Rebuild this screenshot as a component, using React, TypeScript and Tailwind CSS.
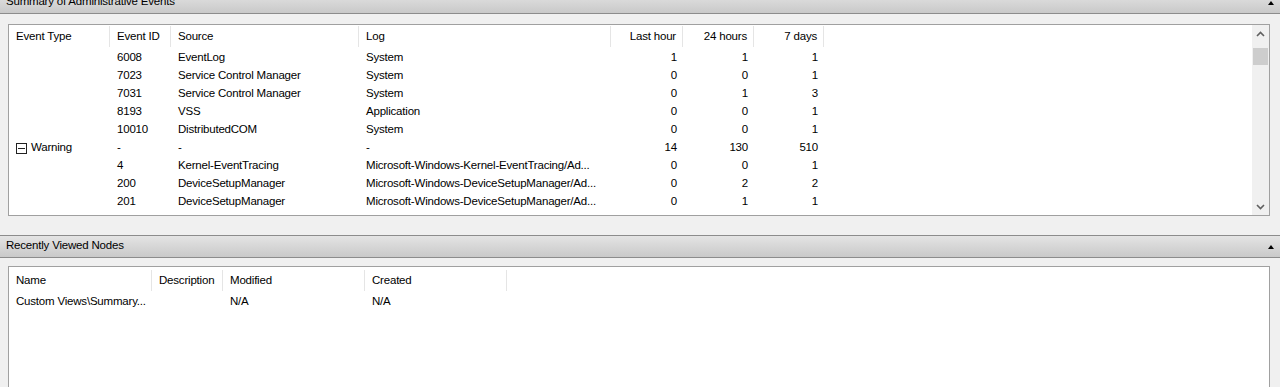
import { ReactNode } from "react";

type Row = {
  type?: string;
  expander?: boolean;
  id: string;
  source: string;
  log: string;
  hour: string;
  day: string;
  week: string;
};

const rows: Row[] = [
  { id: "6008", source: "EventLog", log: "System", hour: "1", day: "1", week: "1" },
  { id: "7023", source: "Service Control Manager", log: "System", hour: "0", day: "0", week: "1" },
  { id: "7031", source: "Service Control Manager", log: "System", hour: "0", day: "1", week: "3" },
  { id: "8193", source: "VSS", log: "Application", hour: "0", day: "0", week: "1" },
  { id: "10010", source: "DistributedCOM", log: "System", hour: "0", day: "0", week: "1" },
  { type: "Warning", expander: true, id: "-", source: "-", log: "-", hour: "14", day: "130", week: "510" },
  { id: "4", source: "Kernel-EventTracing", log: "Microsoft-Windows-Kernel-EventTracing/Ad...", hour: "0", day: "0", week: "1" },
  { id: "200", source: "DeviceSetupManager", log: "Microsoft-Windows-DeviceSetupManager/Ad...", hour: "0", day: "2", week: "2" },
  { id: "201", source: "DeviceSetupManager", log: "Microsoft-Windows-DeviceSetupManager/Ad...", hour: "0", day: "1", week: "1" },
];

function PaneHeader({ title, className = "" }: { title: string; className?: string }) {
  return (
    <div
      className={`flex h-[23px] items-center justify-between border-y border-[#8c8c8c] bg-gradient-to-b from-[#e4e4e4] to-[#c9c9c9] pl-[6px] pr-[6px] text-black ${className}`}
    >
      <span className="-mt-[1px]">{title}</span>
      <span className="mt-[1px] h-0 w-0 border-x-[3px] border-b-[4px] border-x-transparent border-b-black" />
    </div>
  );
}

function Head({ children, w, right }: { children: ReactNode; w: string; right?: boolean }) {
  return (
    <div className={`${w} flex h-[21px] shrink-0 items-center border-r border-[#e5e5e5] px-[7px] ${right ? "justify-end pr-[6px]" : ""}`}>
      {children}
    </div>
  );
}

function Cell({ children, w, right }: { children: ReactNode; w: string; right?: boolean }) {
  return (
    <div className={`${w} flex shrink-0 items-center overflow-hidden whitespace-nowrap px-[7px] ${right ? "justify-end pr-[6px]" : ""}`}>
      {children}
    </div>
  );
}

function Chevron({ up }: { up?: boolean }) {
  return (
    <svg width="9" height="6" viewBox="0 0 9 6" className="text-[#606060]">
      <path d={up ? "M1 5 L4.5 1.5 L8 5" : "M1 1 L4.5 4.5 L8 1"} fill="none" stroke="currentColor" strokeWidth="1.6" />
    </svg>
  );
}

const cols = {
  type: "w-[101px]",
  id: "w-[61px]",
  source: "w-[188px]",
  log: "w-[252px]",
  hour: "w-[72px]",
  day: "w-[71px]",
  week: "w-[70px]",
};

export default function App() {
  return (
    <div
      className="h-[387px] w-[1280px] overflow-hidden bg-[#f0f0f0] text-[11.5px] tracking-[-0.2px] text-black"
      style={{ fontFamily: '"Liberation Sans", Arial, sans-serif' }}
    >
      <PaneHeader title="Summary of Administrative Events" className="-mt-[9px]" />

      <div className="ml-[8px] mr-[10px] mt-[10px] flex h-[192px] border border-[#a0a0a0] bg-white">
        <div className="flex-1 overflow-hidden pt-[1px]">
          <div className="flex">
            <Head w={cols.type}>Event Type</Head>
            <Head w={cols.id}>Event ID</Head>
            <Head w={cols.source}>Source</Head>
            <Head w={cols.log}>Log</Head>
            <Head w={cols.hour} right>Last hour</Head>
            <Head w={cols.day} right>24 hours</Head>
            <Head w={cols.week} right>7 days</Head>
          </div>
          <div className="pt-[2px]">
            {rows.map((r, i) => (
              <div key={i} className="flex h-[18px]">
                <Cell w={cols.type}>
                  {r.expander && (
                    <span className="mr-[4px] flex h-[11px] w-[11px] items-center justify-center border border-[#222]">
                      <span className="h-px w-[7px] bg-[#222]" />
                    </span>
                  )}
                  {r.type}
                </Cell>
                <Cell w={cols.id}>{r.id}</Cell>
                <Cell w={cols.source}>{r.source}</Cell>
                <Cell w={cols.log}>{r.log}</Cell>
                <Cell w={cols.hour} right>{r.hour}</Cell>
                <Cell w={cols.day} right>{r.day}</Cell>
                <Cell w={cols.week} right>{r.week}</Cell>
              </div>
            ))}
          </div>
        </div>
        <div className="flex w-[17px] flex-col bg-[#f0f0f0]">
          <div className="flex h-[17px] items-center justify-center">
            <Chevron up />
          </div>
          <div className="mx-[1px] mt-[6px] h-[17px] bg-[#cdcdcd]" />
          <div className="flex-1" />
          <div className="flex h-[17px] items-center justify-center">
            <Chevron />
          </div>
        </div>
      </div>

      <PaneHeader title="Recently Viewed Nodes" className="mt-[19px]" />

      <div className="ml-[8px] mr-[10px] mt-[8px] h-[140px] border border-[#a0a0a0] bg-white pt-[3px]">
        <div className="flex">
          <Head w="w-[143px]">Name</Head>
          <Head w="w-[71px]">Description</Head>
          <Head w="w-[142px]">Modified</Head>
          <Head w="w-[142px]">Created</Head>
        </div>
        <div className="flex h-[21px] pt-[1px]">
          <Cell w="w-[143px]">Custom Views\Summary...</Cell>
          <Cell w="w-[71px]">{""}</Cell>
          <Cell w="w-[142px]">N/A</Cell>
          <Cell w="w-[142px]">N/A</Cell>
        </div>
      </div>
    </div>
  );
}
